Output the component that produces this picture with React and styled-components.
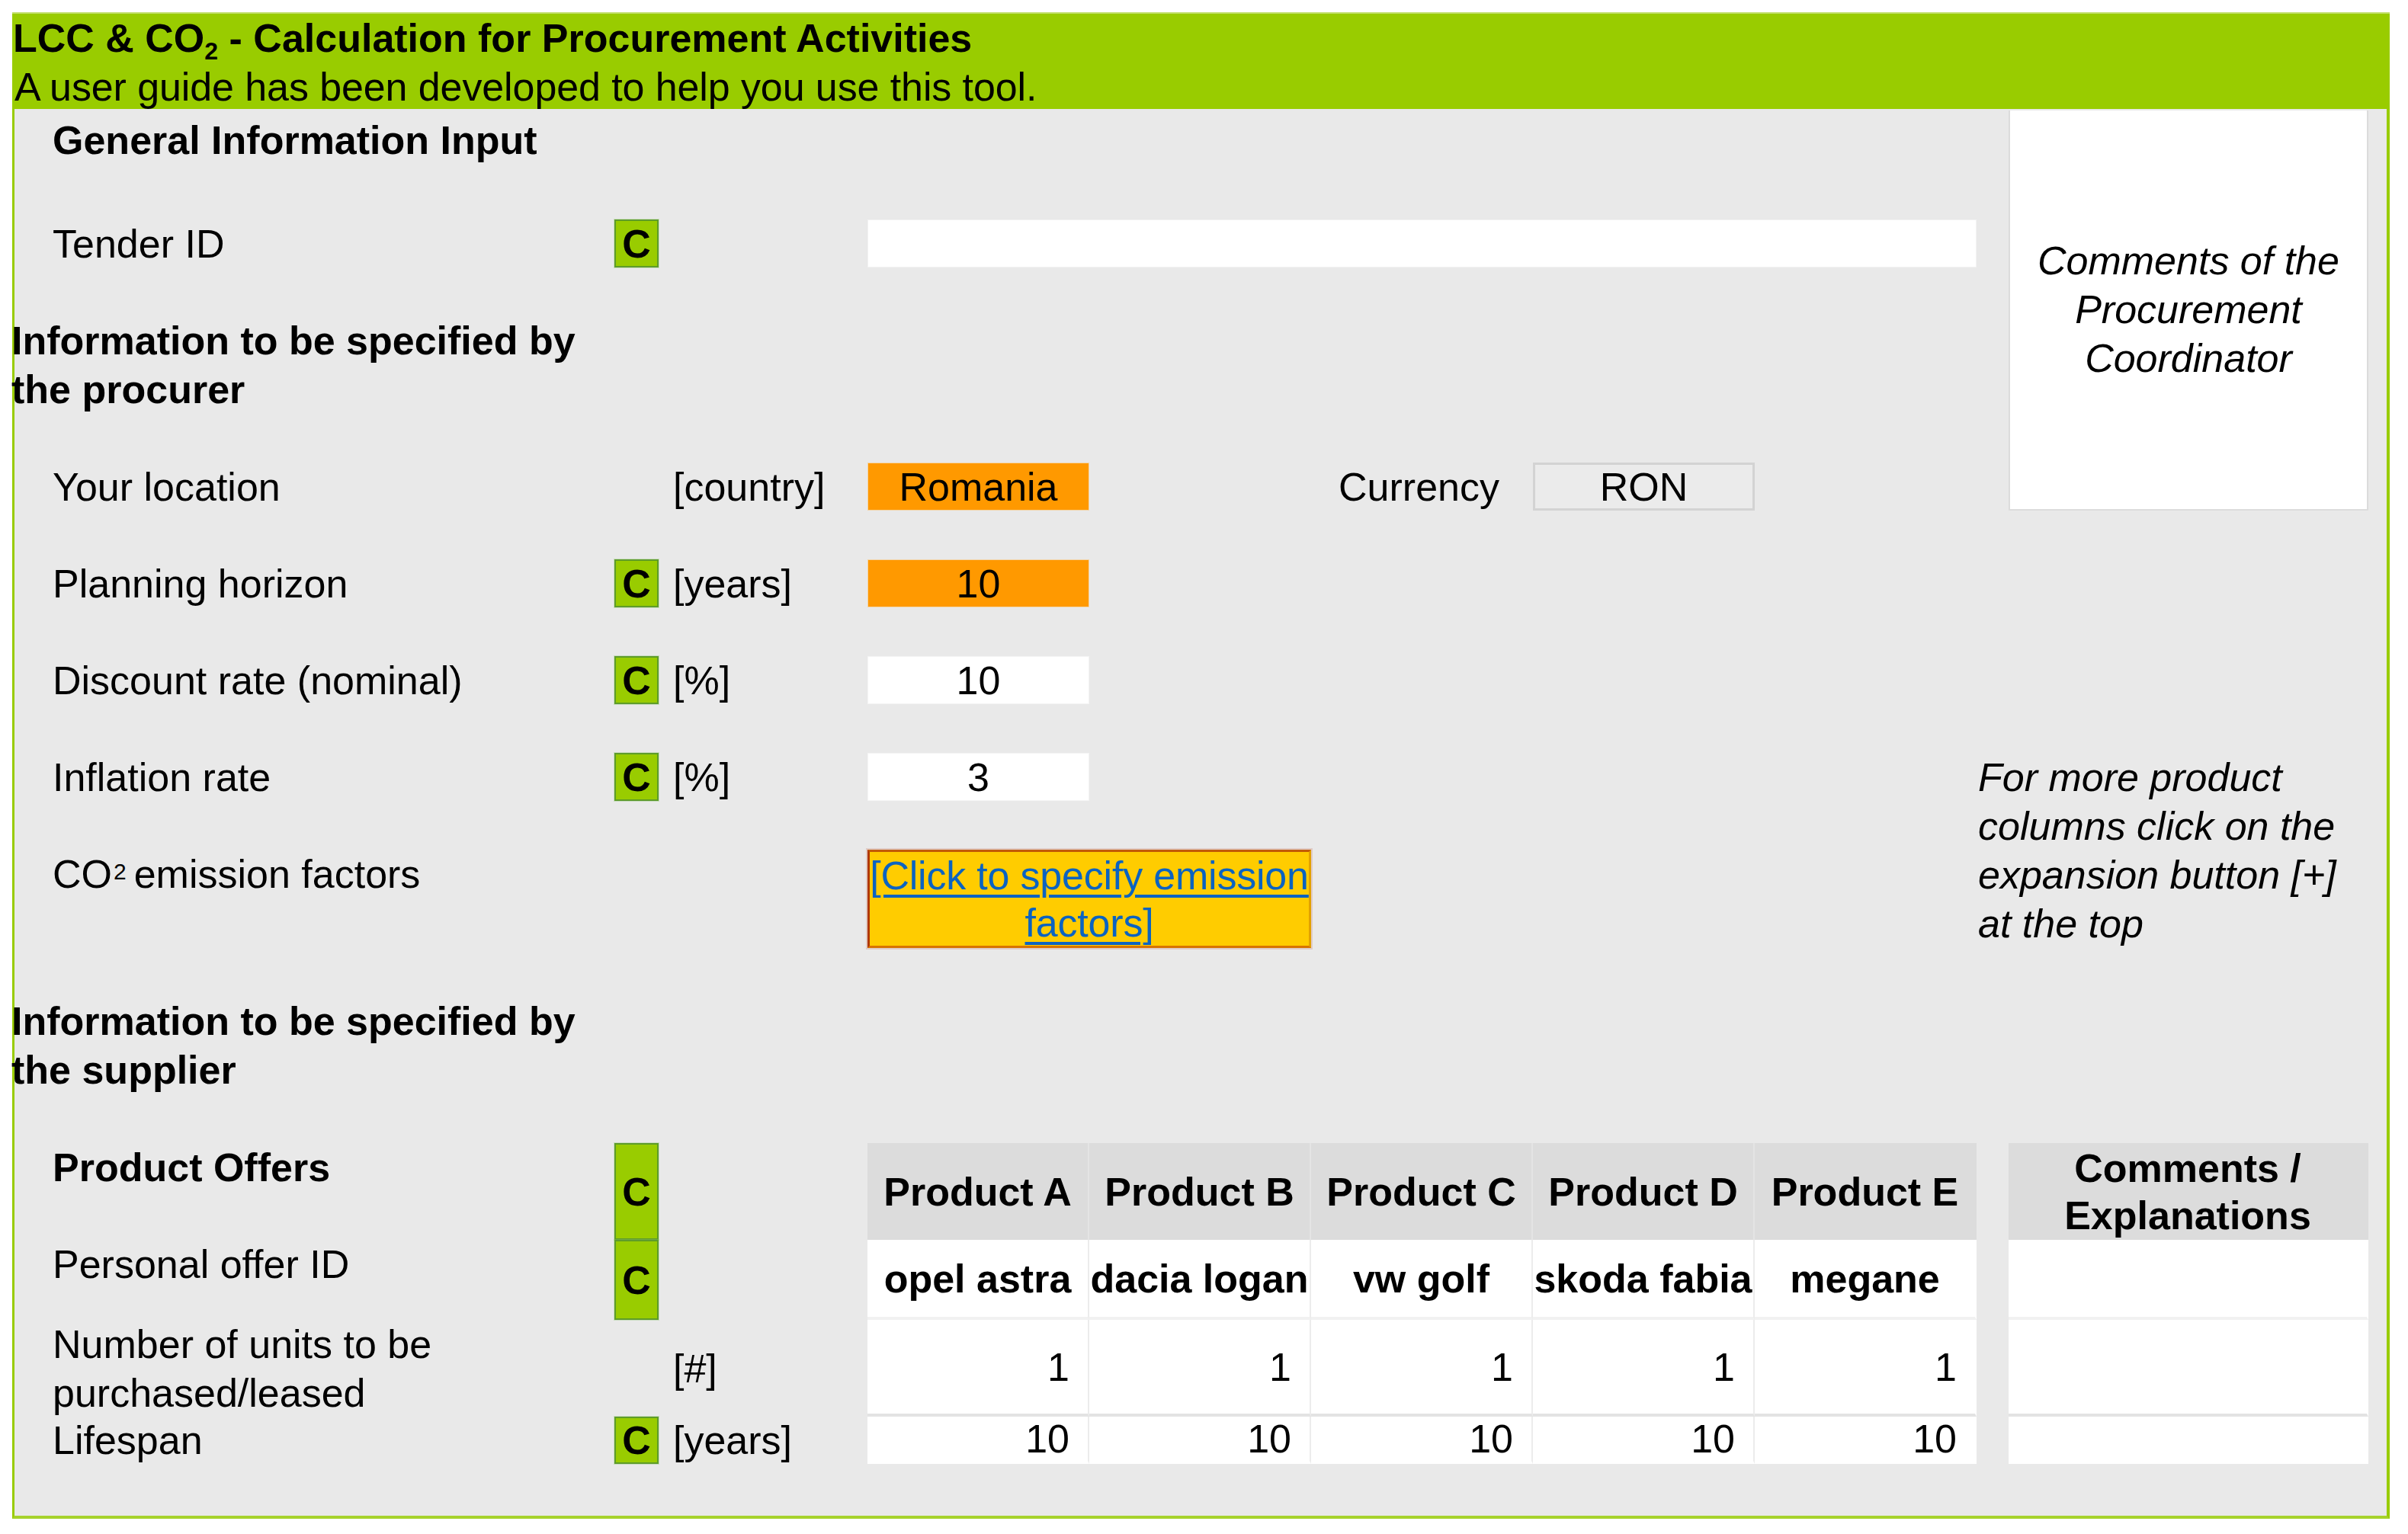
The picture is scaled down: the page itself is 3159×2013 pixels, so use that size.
import React from "react";
import styled, { createGlobalStyle, css } from "styled-components";

const COLUMNS = "787px 58px 274px repeat(5, 291px) 42px 472px";

const GlobalStyle = createGlobalStyle`
  html, body { margin: 0; padding: 0; background: #ffffff; }
  body {
    font-family: "Liberation Sans", Arial, sans-serif;
    color: #000000;
    -webkit-font-smoothing: antialiased;
  }
`;

const Page = styled.div`
  padding: 16px 0 20px 16px;
`;

const Sheet = styled.div`
  width: 3119px;
  font-size: 52px;
  line-height: 64px;
`;

const Banner = styled.header`
  height: 127px;
  box-sizing: border-box;
  background: #99cc00;
  border-top: 2px solid #c4e070;
  padding-left: 1px;
`;

const BannerTitle = styled.h1`
  margin: 0;
  font-size: 52px;
  line-height: 64px;
  font-weight: 700;
  white-space: nowrap;
`;

const BannerSub = styled.p`
  margin: 0;
  padding-left: 2px;
  font-size: 52px;
  line-height: 64px;
  letter-spacing: -0.1px;
  white-space: nowrap;
`;

const Sub = styled.sub`
  font-size: 32px;
  line-height: 0;
  vertical-align: -10px;
`;

const Sup = styled.sup`
  font-size: 30px;
  line-height: 0;
  vertical-align: 11px;
  margin: 0 10px 0 2px;
`;

const Body = styled.main`
  background: #e9e9e9;
  border-left: 3px solid #99cc00;
  border-right: 4px solid #99cc00;
  border-bottom: 4px solid #a6d22c;
  padding: 2px 24px 68px 0;
`;

const gridBase = css`
  display: grid;
  grid-template-columns: ${COLUMNS};
  align-items: center;
`;

const FormGrid = styled.div`
  ${gridBase};
  grid-template-rows: 79px 63px 128px 63px 63px 63px 63px 129px 128px;
  row-gap: 64px;
`;

const OfferGrid = styled.div`
  ${gridBase};
  grid-template-rows: 127px 105px 127px 62px;
  margin-top: 64px;
`;

const SectionTitle = styled.h2`
  grid-column: 1;
  grid-row: ${(p) => p.$row};
  align-self: start;
  margin: 0;
  padding: ${(p) => p.$padTop || 0}px 0 0 50px;
  font-size: 52px;
  line-height: 64px;
  font-weight: 700;
  white-space: nowrap;
`;

const SectionHeading = styled.h3`
  grid-column: 1 / 4;
  grid-row: ${(p) => p.$row};
  margin: 0 0 0 -4px;
  font-size: 52px;
  line-height: 64px;
  font-weight: 700;
  white-space: nowrap;
`;

const Label = styled.div`
  grid-column: 1;
  grid-row: ${(p) => p.$row};
  align-self: ${(p) => (p.$top ? "start" : "center")};
  padding-left: 50px;
  line-height: 64px;
  white-space: nowrap;
`;

const Badge = styled.div`
  grid-column: 2;
  grid-row: ${(p) => p.$row};
  align-self: stretch;
  box-sizing: border-box;
  display: flex;
  align-items: center;
  justify-content: center;
  background: #99cc00;
  border: 2px solid #5e9c2a;
  box-shadow: 0 0 0 1px rgba(150, 200, 120, 0.35);
  font-weight: 700;
  line-height: 1;
`;

const Unit = styled.div`
  grid-column: 3;
  grid-row: ${(p) => p.$row};
  padding-left: 19px;
  line-height: 64px;
  white-space: nowrap;
`;

const tones = {
  orange: css`
    background: #ff9900;
    border: 1px solid #f3d5a8;
  `,
  white: css`
    background: #ffffff;
    border: 1px solid #f4f4f4;
  `,
  gray: css`
    background: #ebebeb;
    border: 3px solid #d3d3d3;
  `,
};

const ValueBox = styled.div`
  grid-column: ${(p) => p.$col || 4};
  grid-row: ${(p) => p.$row};
  align-self: stretch;
  box-sizing: border-box;
  display: flex;
  align-items: center;
  justify-content: center;
  ${(p) => tones[p.$tone || "white"]};
`;

const TenderInput = styled.div`
  grid-column: 4 / 9;
  grid-row: 2;
  align-self: stretch;
  background: #ffffff;
  border: 1px solid #f2f2f2;
`;

const CurrencyLabel = styled.div`
  grid-column: 6;
  grid-row: 4;
  text-align: right;
  padding-right: 44px;
  white-space: nowrap;
`;

const LinkBox = styled.div`
  grid-column: 4 / 6;
  grid-row: 8;
  align-self: stretch;
  box-sizing: border-box;
  background: #ffcc00;
  border-style: solid;
  border-width: 3px;
  border-color: #c25a05 #e2a000 #d87400 #b0380a;
  box-shadow: 0 0 0 2px rgba(200, 120, 100, 0.25);
  text-align: center;
  line-height: 62px;
  white-space: nowrap;
  letter-spacing: -0.2px;
`;

const LinkText = styled.a`
  color: #0b63c1;
  text-decoration: underline;
  text-decoration-thickness: 4px;
  text-underline-offset: 7px;
`;

const CommentsPanel = styled.aside`
  grid-column: 10;
  grid-row: 1 / 5;
  align-self: stretch;
  box-sizing: border-box;
  display: flex;
  align-items: center;
  justify-content: center;
  background: #ffffff;
  border: 2px solid #dcdcdc;
  border-top: none;
  font-style: italic;
  text-align: center;
  line-height: 64px;
  padding-bottom: 2px;
`;

const Note = styled.p`
  grid-column: 9 / 11;
  grid-row: 7 / 9;
  margin: 0 0 0 2px;
  font-style: italic;
  line-height: 64px;
  white-space: nowrap;
`;

const cellBase = css`
  grid-column: ${(p) => p.$col};
  grid-row: ${(p) => p.$row};
  align-self: stretch;
  box-sizing: border-box;
  display: flex;
  align-items: center;
  white-space: nowrap;
`;

const HeadCell = styled.div`
  ${cellBase};
  justify-content: center;
  background: #dcdcdc;
  border-right: 2px solid ${(p) => (p.$last ? "#dcdcdc" : "#e4e4e4")};
  font-weight: 700;
  text-align: center;
  line-height: 62px;
`;

const bands = {
  light: "#f1f1f1",
  dark: "#e3e3e3",
  none: "#ffffff",
};

const DataCell = styled.div`
  ${cellBase};
  justify-content: ${(p) => (p.$align === "right" ? "flex-end" : "center")};
  padding-right: ${(p) => (p.$align === "right" ? "24px" : "0")};
  background: #ffffff;
  border-right: 2px solid ${(p) => (p.$last ? "#ffffff" : "#ececec")};
  border-bottom: 4px solid ${(p) => bands[p.$band || "none"]};
  font-weight: ${(p) => (p.$bold ? 700 : 400)};
`;

const products = [
  { name: "Product A", offer: "opel astra", units: 1, life: 10 },
  { name: "Product B", offer: "dacia logan", units: 1, life: 10 },
  { name: "Product C", offer: "vw golf", units: 1, life: 10 },
  { name: "Product D", offer: "skoda fabia", units: 1, life: 10 },
  { name: "Product E", offer: "megane", units: 1, life: 10 },
];

export default function App() {
  return (
    <>
      <GlobalStyle />
      <Page>
        <Sheet>
          <Banner>
            <BannerTitle>
              LCC &amp; CO<Sub>2</Sub> - Calculation for Procurement Activities
            </BannerTitle>
            <BannerSub>A user guide has been developed to help you use this tool.</BannerSub>
          </Banner>

          <Body>
            <FormGrid>
              <SectionTitle $row={1} $padTop={7}>
                General Information Input
              </SectionTitle>
              <CommentsPanel>
                <span>
                  Comments of the
                  <br />
                  Procurement
                  <br />
                  Coordinator
                </span>
              </CommentsPanel>

              <Label $row={2}>Tender ID</Label>
              <Badge $row={2}>C</Badge>
              <TenderInput />

              <SectionHeading $row={3}>
                Information to be specified by
                <br />
                the procurer
              </SectionHeading>

              <Label $row={4}>Your location</Label>
              <Unit $row={4}>[country]</Unit>
              <ValueBox $row={4} $tone="orange">Romania</ValueBox>
              <CurrencyLabel>Currency</CurrencyLabel>
              <ValueBox $row={4} $col={7} $tone="gray">RON</ValueBox>

              <Label $row={5}>Planning horizon</Label>
              <Badge $row={5}>C</Badge>
              <Unit $row={5}>[years]</Unit>
              <ValueBox $row={5} $tone="orange">10</ValueBox>

              <Label $row={6}>Discount rate (nominal)</Label>
              <Badge $row={6}>C</Badge>
              <Unit $row={6}>[%]</Unit>
              <ValueBox $row={6}>10</ValueBox>

              <Label $row={7}>Inflation rate</Label>
              <Badge $row={7}>C</Badge>
              <Unit $row={7}>[%]</Unit>
              <ValueBox $row={7}>3</ValueBox>
              <Note>
                For more product
                <br />
                columns click on the
                <br />
                expansion button [+]
                <br />
                at the top
              </Note>

              <Label $row={8} $top>
                CO<Sup>2</Sup>emission factors
              </Label>
              <LinkBox>
                <LinkText href="#">
                  [Click to specify emission
                  <br />
                  factors]
                </LinkText>
              </LinkBox>

              <SectionHeading $row={9}>
                Information to be specified by
                <br />
                the supplier
              </SectionHeading>
            </FormGrid>

            <OfferGrid>
              <SectionTitle $row={1}>Product Offers</SectionTitle>
              <Badge $row={1}>C</Badge>
              {products.map((p, i) => (
                <HeadCell key={p.name} $row={1} $col={4 + i} $last={i === 4}>
                  {p.name}
                </HeadCell>
              ))}
              <HeadCell $row={1} $col={10} $last>
                Comments /
                <br />
                Explanations
              </HeadCell>

              <Label $row={2} $top>
                Personal offer ID
              </Label>
              <Badge $row={2}>C</Badge>
              {products.map((p, i) => (
                <DataCell key={p.offer} $row={2} $col={4 + i} $bold $band="light" $last={i === 4}>
                  {p.offer}
                </DataCell>
              ))}
              <DataCell $row={2} $col={10} $band="light" $last />

              <Label $row={3} $top>
                Number of units to be
                <br />
                purchased/leased
              </Label>
              <Unit $row={3}>[#]</Unit>
              {products.map((p, i) => (
                <DataCell key={p.name + "u"} $row={3} $col={4 + i} $align="right" $band="dark" $last={i === 4}>
                  {p.units}
                </DataCell>
              ))}
              <DataCell $row={3} $col={10} $band="dark" $last />

              <Label $row={4}>Lifespan</Label>
              <Badge $row={4}>C</Badge>
              <Unit $row={4}>[years]</Unit>
              {products.map((p, i) => (
                <DataCell key={p.name + "l"} $row={4} $col={4 + i} $align="right" $last={i === 4}>
                  {p.life}
                </DataCell>
              ))}
              <DataCell $row={4} $col={10} $last />
            </OfferGrid>
          </Body>
        </Sheet>
      </Page>
    </>
  );
}
